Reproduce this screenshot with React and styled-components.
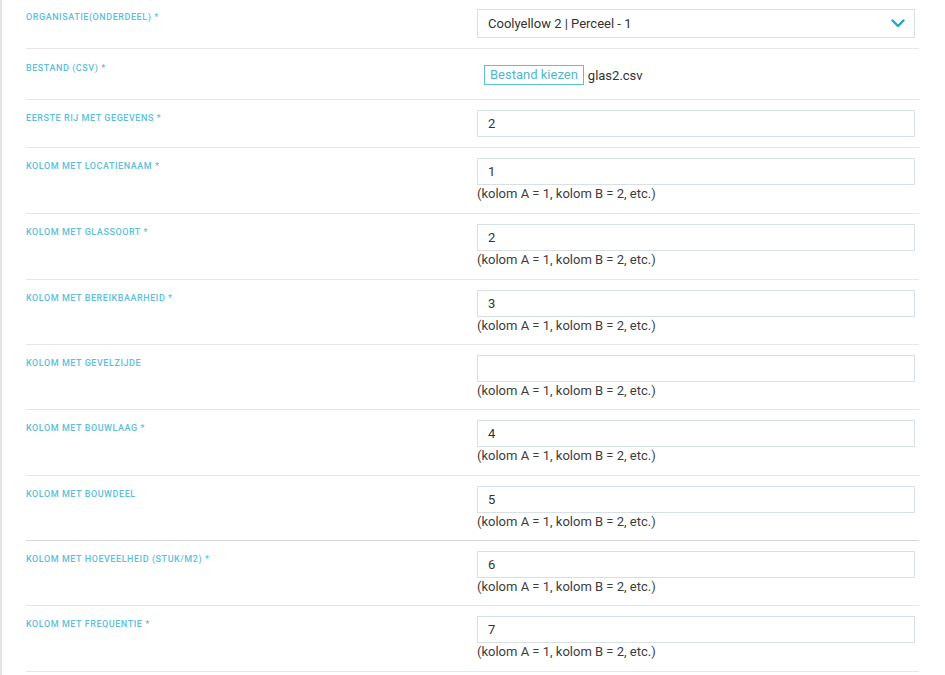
import React from 'react'
import styled, { createGlobalStyle } from 'styled-components'

const GlobalStyle = createGlobalStyle`
    html, body {
        margin: 0;
        padding: 0;
        background: #fff;
        font-family: Roboto, "Liberation Sans", Arial, sans-serif;
    }
`

const Page = styled.div`
    min-height: 675px;
    border-left: 2px solid #e4e4e4;
    padding-left: 24px;
    box-sizing: border-box;
`

const Form = styled.div`
    width: 893px;
`

const Row = styled.div`
    display: grid;
    grid-template-columns: 451px 438px;
    padding: ${p => p.$pad || '10px 0 10px'};
    padding-bottom: ${p => p.$tall ? '11px' : undefined};
    border-bottom: 1px solid ${p => p.$dark ? '#d6d6d6' : '#e6e6e6'};
`

const Label = styled.div`
    padding-top: ${p => p.$top || '2px'};
    font-size: 9px;
    line-height: 12px;
    font-weight: 500;
    letter-spacing: 0.55px;
    text-transform: uppercase;
    color: #5cbfdb;
`

const Field = styled.div`
    display: flex;
    flex-direction: column;
`

const Input = styled.div`
    height: 27px;
    box-sizing: border-box;
    border: 1px solid #d8dfe5;
    padding: 0 10px;
    display: flex;
    align-items: center;
    font-size: 13px;
    color: #333;
`

const Select = styled(Input)`
    height: 29px;
    justify-content: space-between;
    padding-right: 9px;
`

const Help = styled.div`
    font-size: 13px;
    line-height: 17px;
    color: #3d3d3d;
`

const FileRow = styled.div`
    display: flex;
    align-items: center;
    gap: 4px;
    padding: 6px 0 0 7px;
    font-size: 13px;
    color: #333;
`

const FileButton = styled.span`
    display: inline-block;
    border: 1px solid #5cbfdb;
    color: #4fb6d4;
    padding: 0 5px;
    height: 20px;
    line-height: 18px;
    box-sizing: border-box;
`

const Chevron = () => (
    <svg width="14" height="9" viewBox="0 0 14 9">
        <polyline points="1.5,1.5 7,7 12.5,1.5" fill="none" stroke="#1ea6c4" strokeWidth="2.4" strokeLinecap="round" strokeLinejoin="round" />
    </svg>
)

const columns = [
    { label: 'Kolom met locatienaam *', value: '1', tall: true },
    { label: 'Kolom met glassoort *', value: '2', tall: true },
    { label: 'Kolom met bereikbaarheid *', value: '3' },
    { label: 'Kolom met gevelzijde', value: '' },
    { label: 'Kolom met bouwlaag *', value: '4', tall: true },
    { label: 'Kolom met bouwdeel', value: '5', dark: true },
    { label: 'Kolom met hoeveelheid (stuk/m2) *', value: '6' },
    { label: 'Kolom met frequentie *', value: '7', tall: true },
]

const App = () => {
    return (
        <Page>
            <GlobalStyle />
            <Form>
                <Row $pad="9px 0 10px">
                    <Label>Organisatie(onderdeel) *</Label>
                    <Select>
                        <span>Coolyellow 2 | Perceel - 1</span>
                        <Chevron />
                    </Select>
                </Row>
                <Row $pad="10px 0 14px">
                    <Label $top="3px">Bestand (csv) *</Label>
                    <FileRow>
                        <FileButton>Bestand kiezen</FileButton>
                        <span>glas2.csv</span>
                    </FileRow>
                </Row>
                <Row>
                    <Label>Eerste rij met gegevens *</Label>
                    <Input>2</Input>
                </Row>
                {columns.map(c => (
                    <Row key={c.label} $dark={c.dark} $tall={c.tall}>
                        <Label>{c.label}</Label>
                        <Field>
                            <Input>{c.value}</Input>
                            <Help>(kolom A = 1, kolom B = 2, etc.)</Help>
                        </Field>
                    </Row>
                ))}
            </Form>
        </Page>
    )
}

export default App
